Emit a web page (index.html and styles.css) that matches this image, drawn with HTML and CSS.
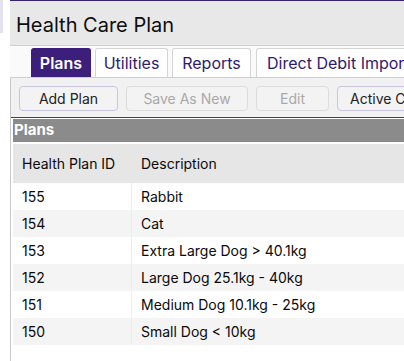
FILE: index.html
```html
<!DOCTYPE html>
<html>
<head>
<meta charset="utf-8">
<link rel="stylesheet" href="styles.css">
</head>
<body>
<div class="shell">
  <div class="side"></div>
  <div class="panel">
    <div class="header"><h1 class="title">Health Care Plan</h1></div>
    <div class="tabs">
      <div class="tab active t-plans">Plans</div>
      <div class="tab t-util">Utilities</div>
      <div class="tab t-rep">Reports</div>
      <div class="tab t-dd">Direct Debit Import</div>
    </div>
    <div class="content">
      <div class="toolbar">
        <button class="btn b-add">Add Plan</button>
        <button class="btn disabled b-save">Save As New</button>
        <button class="btn disabled b-edit">Edit</button>
        <button class="btn b-active">Active Cover</button>
      </div>
      <div class="section">Plans</div>
      <div class="grid">
        <div class="row head"><div class="c1">Health Plan ID</div><div class="c2">Description</div></div>
        <div class="row"><div class="c1">155</div><div class="c2">Rabbit</div></div>
        <div class="row alt"><div class="c1">154</div><div class="c2">Cat</div></div>
        <div class="row"><div class="c1">153</div><div class="c2">Extra Large Dog &gt; 40.1kg</div></div>
        <div class="row alt"><div class="c1">152</div><div class="c2">Large Dog 25.1kg - 40kg</div></div>
        <div class="row"><div class="c1">151</div><div class="c2">Medium Dog 10.1kg - 25kg</div></div>
        <div class="row alt"><div class="c1">150</div><div class="c2">Small Dog &lt; 10kg</div></div>
      </div>
    </div>
  </div>
</div>
</body>
</html>
```
FILE: styles.css
```css
* { box-sizing: border-box; }
html, body { margin: 0; padding: 0; background: #ffffff; overflow: hidden; }
body { font-family: "Inter", "Liberation Sans", sans-serif; color: #111; width: 404px; height: 361px; }
.shell { display: flex; align-items: flex-start; gap: 7px; height: 361px; }
.side { width: 3px; height: 33px; background: #e4e2ef; flex: none; }
.panel { flex: 1; min-width: 0; height: 361px; display: flex; flex-direction: column; overflow: hidden; }
.header { background: #e8e8e8; border-top: 1px solid #3a1f78; border-bottom: 1px solid #cfcfcf; height: 46px; padding: 12px 0 0 6px; }
.title { margin: 0; font-weight: 400; font-size: 20px; line-height: 24px; color: #0d0d0d; white-space: nowrap; }
.tabs { display: flex; gap: 4px; padding: 2px 0 0 21px; height: 31px; background: #fafafa; white-space: nowrap; }
.tab { height: 29px; padding: 0; text-align: center; border: 1px solid #d4d4d4; border-bottom: none; border-radius: 3px 3px 0 0; background: #fff; color: #2e1b6e; font-size: 16px; line-height: 28px; flex: none; }
.t-plans { width: 60px; }
.t-util { width: 73px; }
.t-rep { width: 79px; }
.t-dd { padding: 0 10px; margin-left: 1px; }
.tab.active { background: #3b1f7b; border-color: #3b1f7b; color: #fff; font-weight: 600; }
.content { flex: 1; border-left: 1px solid #c8c8c8; border-top: 1px solid #cfcfcf; display: flex; flex-direction: column; }
.toolbar { display: flex; gap: 8px; padding: 8px 0 0 8px; height: 40px; background: #f1f1f1; border-bottom: 1px solid #444; white-space: nowrap; }
.btn { flex: none; height: 25px; border: 1px solid #c9c5dd; border-radius: 4px; background: #f3f3f3; font-family: inherit; font-size: 14px; color: #222; padding: 0; text-align: left; }
.b-add { width: 99px; text-align: center; }
.b-save { width: 122px; text-align: center; }
.b-edit { width: 73px; text-align: center; }
.b-active { width: 110px; padding-left: 12px; }
.btn.disabled { color: #a9a9a9; border-color: #dcdcdc; }
.section { margin: 1px 0 0 2px; height: 23px; background: #8b8b8b; color: #fff; font-weight: 700; font-size: 15px; line-height: 22px; padding-left: 1px; }
.grid { margin: 2px 0 0 2px; }
.row { display: flex; height: 27px; align-items: center; font-size: 14px; color: #0a0a0a; background: #fff; }
.row.alt { background: #f4f4f4; }
.row.head { height: 39px; background: #e6e6e6; }
.c1 { width: 119px; padding-left: 9px; align-self: stretch; display: flex; align-items: center; border-right: 1px solid #ececec; }
.row.head .c1 { border-right-color: transparent; }
.c2 { padding-left: 9px; }
```
